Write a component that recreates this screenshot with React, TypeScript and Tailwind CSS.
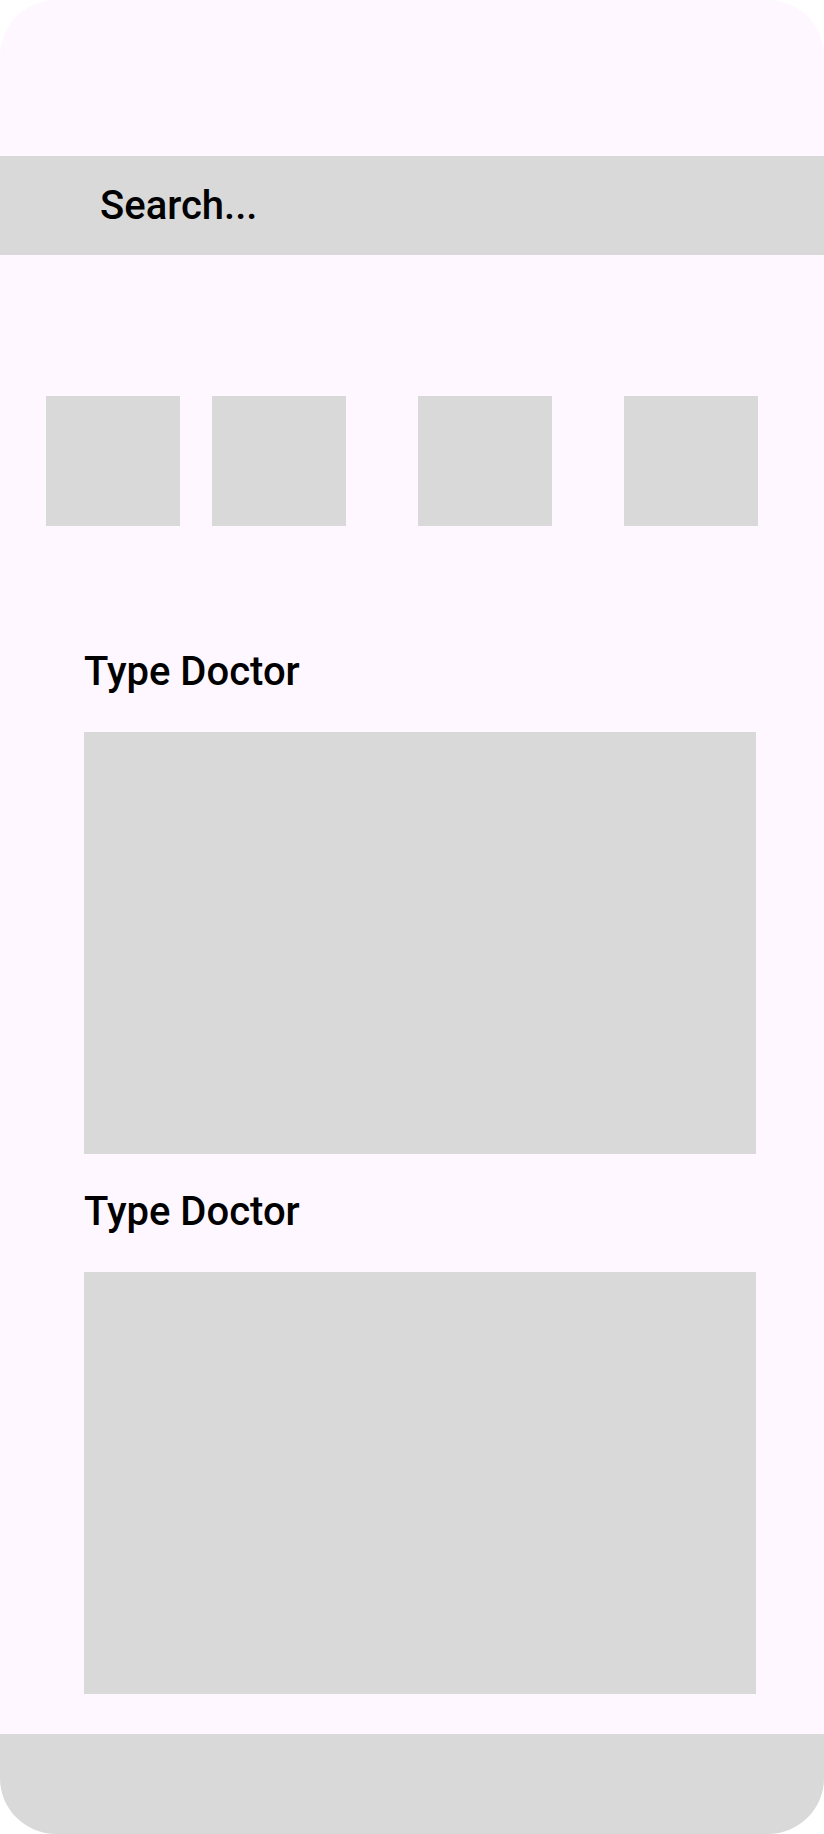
import React from 'react'

const Square: React.FC<{ className?: string }> = ({ className = '' }) => (
  <div className={`w-[134px] h-[130px] bg-[#d9d9d9] shrink-0 ${className}`} />
)

const DoctorSection: React.FC<{ className?: string }> = ({ className = '' }) => (
  <section className={`flex flex-col pl-[84px] ${className}`}>
    <h2 className="text-[40px] leading-[47px] font-medium text-black">Type Doctor</h2>
    <div className="mt-[37px] w-[672px] h-[422px] bg-[#d9d9d9]" />
  </section>
)

const App: React.FC = () => {
  return (
    <div
      className="w-[824px] h-[1834px] bg-[#fef7ff] rounded-[56px] overflow-hidden flex flex-col"
      style={{ fontFamily: 'Roboto, "Liberation Sans", sans-serif' }}
    >
      <div className="mt-[156px] h-[99px] bg-[#d9d9d9] flex items-center pl-[100px]">
        <span className="text-[40px] leading-[47px] font-medium text-black">Search...</span>
      </div>

      <div className="mt-[141px] flex pl-[46px]">
        <Square />
        <Square className="ml-[32px]" />
        <Square className="ml-[72px]" />
        <Square className="ml-[72px]" />
      </div>

      <DoctorSection className="mt-[122px]" />
      <DoctorSection className="mt-[34px]" />

      <footer className="mt-auto h-[100px] bg-[#d9d9d9]" />
    </div>
  )
}

export default App
